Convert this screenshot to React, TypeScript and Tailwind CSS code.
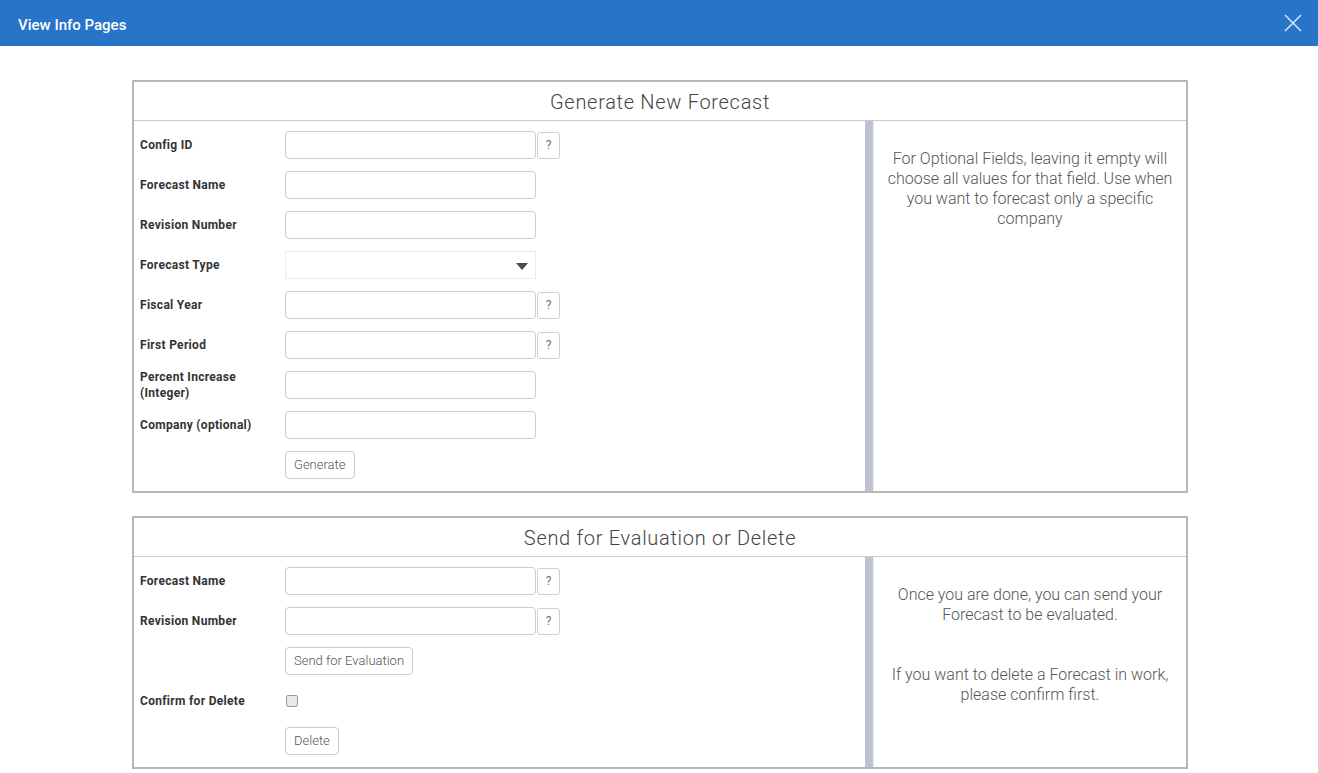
import React from 'react';

const font = { fontFamily: 'Roboto, "Noto Sans", sans-serif' };

function HelpButton() {
  return (
    <button
      type="button"
      className="ml-px h-[27px] w-[23px] shrink-0 rounded-[3px] border border-[#cfcfcf] bg-white text-[12px] text-[#777]"
    >
      ?
    </button>
  );
}

function Field({
  label,
  help,
  select,
}: {
  label: React.ReactNode;
  help?: boolean;
  select?: boolean;
}) {
  return (
    <div className="flex h-[28px] items-center">
      <div className="w-[151px] shrink-0 pl-[6px] text-[12px] font-bold leading-[16px] tracking-[0.3px] text-[#333]">
        {label}
      </div>
      {select ? (
        <div className="relative h-[28px] w-[251px] shrink-0 border border-[#ebebeb] bg-white">
          <svg
            className="absolute right-[7px] top-[11px]"
            width="12"
            height="7"
            viewBox="0 0 12 7"
          >
            <path d="M0 0 L12 0 L6 7 Z" fill="#4a4a55" />
          </svg>
        </div>
      ) : (
        <input
          type="text"
          className="h-[28px] w-[251px] shrink-0 rounded-[4px] border border-[#cccccc] bg-white px-2 text-[13px] outline-none"
        />
      )}
      {help && <HelpButton />}
    </div>
  );
}

function PlainButton({ children }: { children: React.ReactNode }) {
  return (
    <button
      type="button"
      className="h-[28px] rounded-[4px] border border-[#cccccc] bg-white px-[8px] text-[13px] font-light text-[#555]"
    >
      {children}
    </button>
  );
}

function Panel({
  title,
  children,
  aside,
}: {
  title: string;
  children: React.ReactNode;
  aside: React.ReactNode;
}) {
  return (
    <div className="ml-[132px] w-[1056px] border-2 border-[#bab6b6] bg-white">
      <div className="flex h-[39px] items-center justify-center border-b border-[#cbcbcb] pt-[2px] text-[20px] font-light tracking-[0.7px] text-[#444]">
        {title}
      </div>
      <div className="flex">
        <div className="w-[731px] pb-[12px] pt-[10px]">{children}</div>
        <div className="w-[8px] bg-[#bfc2d5]" />
        <div className="w-px bg-[#eeeeee]" />
        <div className="flex-1 px-[8px] text-center text-[16px] font-light leading-[20px] text-[#555]">
          {aside}
        </div>
      </div>
    </div>
  );
}

export default function App() {
  return (
    <div className="min-h-screen bg-white" style={font}>
      <div className="flex h-[46px] items-center justify-between bg-[#2874c8] pl-[18px] pr-[16px] pt-[4px]">
        <span className="text-[15px] font-medium text-white">View Info Pages</span>
        <svg width="18" height="18" viewBox="0 0 18 18" className="-mt-[4px]">
          <path d="M1 1 L17 17 M17 1 L1 17" stroke="#d3e2f5" strokeWidth="1.6" />
        </svg>
      </div>

      <div className="pt-[34px]">
        <Panel
          title="Generate New Forecast"
          aside={
            <div className="pt-[28px]">
              For Optional Fields, leaving it empty will choose all values for that field. Use when
              you want to forecast only a specific company
            </div>
          }
        >
          <div className="flex flex-col gap-[12px]">
            <Field label="Config ID" help />
            <Field label="Forecast Name" />
            <Field label="Revision Number" />
            <Field label="Forecast Type" select />
            <Field label="Fiscal Year" help />
            <Field label="First Period" help />
            <Field
              label={
                <>
                  Percent Increase
                  <br />
                  (Integer)
                </>
              }
            />
            <Field label="Company (optional)" />
            <div className="pl-[151px]">
              <PlainButton>Generate</PlainButton>
            </div>
          </div>
        </Panel>
      </div>

      <div className="pt-[23px]">
        <Panel
          title="Send for Evaluation or Delete"
          aside={
            <div className="pt-[28px]">
              <p>
                Once you are done, you can send your
                <br />
                Forecast to be evaluated.
              </p>
              <p className="mt-[40px]">
                If you want to delete a Forecast in work,
                <br />
                please confirm first.
              </p>
            </div>
          }
        >
          <div className="flex flex-col gap-[12px]">
            <Field label="Forecast Name" help />
            <Field label="Revision Number" help />
            <div className="pl-[151px]">
              <PlainButton>Send for Evaluation</PlainButton>
            </div>
            <div className="flex h-[28px] items-center">
              <div className="w-[151px] shrink-0 pl-[6px] text-[12px] font-bold tracking-[0.3px] text-[#333]">
                Confirm for Delete
              </div>
              <input
                type="checkbox"
                className="ml-[1px] h-[12px] w-[12px] appearance-none rounded-[2px] border border-[#999] bg-[#e8e8e8]"
              />
            </div>
            <div className="pl-[151px]">
              <PlainButton>Delete</PlainButton>
            </div>
          </div>
        </Panel>
      </div>
    </div>
  );
}
